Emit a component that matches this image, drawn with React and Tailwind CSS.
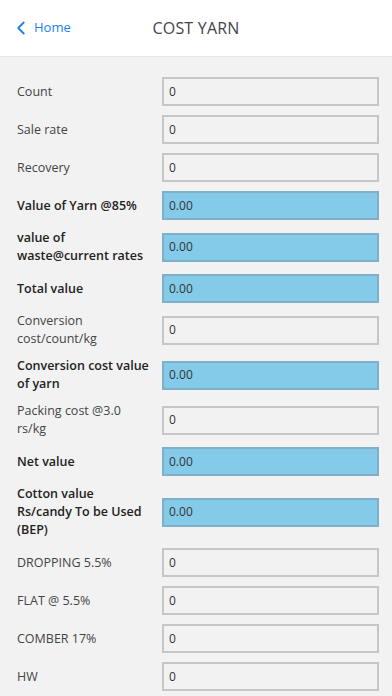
import { ChevronLeft } from "lucide-react";

const rows = [
  { label: ["Count"], value: "0" },
  { label: ["Sale rate"], value: "0" },
  { label: ["Recovery"], value: "0" },
  { label: ["Value of Yarn @85%"], value: "0.00", calc: true },
  { label: ["value of", "waste@current rates"], value: "0.00", calc: true },
  { label: ["Total value"], value: "0.00", calc: true },
  { label: ["Conversion", "cost/count/kg"], value: "0" },
  { label: ["Conversion cost value", "of yarn"], value: "0.00", calc: true },
  { label: ["Packing cost @3.0", "rs/kg"], value: "0" },
  { label: ["Net value"], value: "0.00", calc: true },
  {
    label: ["Cotton value", "Rs/candy To be Used", "(BEP)"],
    value: "0.00",
    calc: true,
  },
  { label: ["DROPPING 5.5%"], value: "0" },
  { label: ["FLAT @ 5.5%"], value: "0" },
  { label: ["COMBER 17%"], value: "0" },
  { label: ["HW"], value: "0" },
];

function Row({ label, value, calc }) {
  return (
    <div className="flex items-center py-[4.5px]">
      <div
        className={`w-[145px] shrink-0 text-[12.5px] leading-[18px] ${
          calc ? "font-semibold text-[#222]" : "text-[#444]"
        }`}
      >
        {label.map((line) => (
          <div key={line}>{line}</div>
        ))}
      </div>
      <div
        className={`h-[29px] flex-1 border-2 flex items-center px-[5px] text-[12px] text-[#333] ${
          calc
            ? "bg-[#84cbe9] border-[#7fb0c8]"
            : "bg-[#f2f2f2] border-[#c6c6c6]"
        }`}
      >
        {value}
      </div>
    </div>
  );
}

export default function App() {
  return (
    <div
      className="w-[392px] h-[696px] overflow-hidden bg-[#f2f2f2]"
      style={{ fontFamily: '"Open Sans", "Noto Sans", sans-serif' }}
    >
      <div className="relative h-[57px] bg-white border-b border-[#e6e6e6] flex items-center justify-center">
        <div className="absolute left-[10px] top-0 h-full flex items-center text-[#1a7ff5] text-[13px]">
          <ChevronLeft size={22} strokeWidth={2} />
          <span className="ml-[2px]">Home</span>
        </div>
        <div className="text-[16px] text-[#444] tracking-[0.2px]">COST YARN</div>
      </div>
      <div className="pl-[17px] pr-[13px] pt-[15.5px]">
        {rows.map((r) => (
          <Row key={r.label.join(" ")} {...r} />
        ))}
      </div>
    </div>
  );
}
